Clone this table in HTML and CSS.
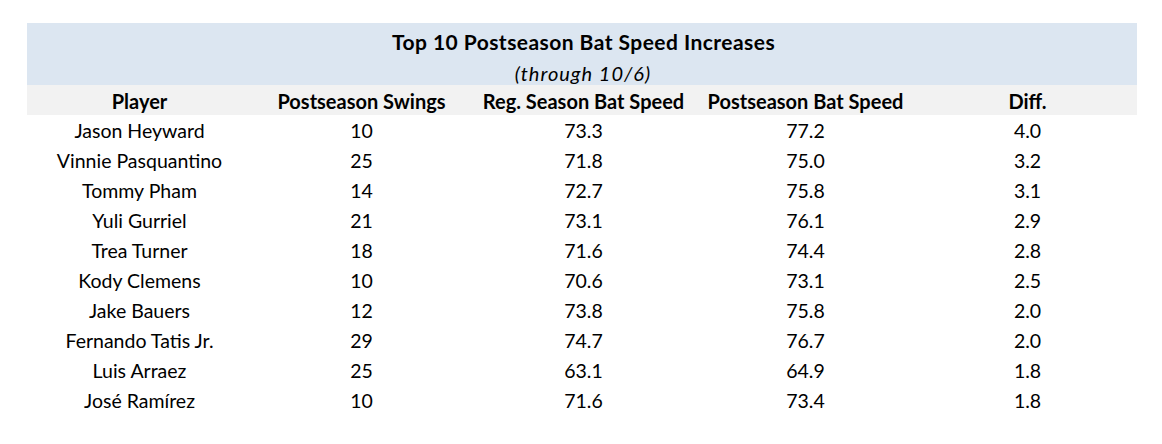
FILE: index.html
```html
<!DOCTYPE html>
<html>
<head>
<meta charset="utf-8">
<link rel="stylesheet" href="styles.css">
</head>
<body>
<div class="sheet">
  <div class="band">
    <div class="title">Top 10 Postseason Bat Speed Increases</div>
    <div class="subtitle">(through 10/6)</div>
  </div>
  <div class="grid head">
    <div>Player</div><div>Postseason Swings</div><div>Reg. Season Bat Speed</div><div>Postseason Bat Speed</div><div>Diff.</div>
  </div>
  <div class="grid row"><div>Jason Heyward</div><div>10</div><div>73.3</div><div>77.2</div><div>4.0</div></div>
  <div class="grid row"><div>Vinnie Pasquantino</div><div>25</div><div>71.8</div><div>75.0</div><div>3.2</div></div>
  <div class="grid row"><div>Tommy Pham</div><div>14</div><div>72.7</div><div>75.8</div><div>3.1</div></div>
  <div class="grid row"><div>Yuli Gurriel</div><div>21</div><div>73.1</div><div>76.1</div><div>2.9</div></div>
  <div class="grid row"><div>Trea Turner</div><div>18</div><div>71.6</div><div>74.4</div><div>2.8</div></div>
  <div class="grid row"><div>Kody Clemens</div><div>10</div><div>70.6</div><div>73.1</div><div>2.5</div></div>
  <div class="grid row"><div>Jake Bauers</div><div>12</div><div>73.8</div><div>75.8</div><div>2.0</div></div>
  <div class="grid row"><div>Fernando Tatis Jr.</div><div>29</div><div>74.7</div><div>76.7</div><div>2.0</div></div>
  <div class="grid row"><div>Luis Arraez</div><div>25</div><div>63.1</div><div>64.9</div><div>1.8</div></div>
  <div class="grid row"><div>José Ramírez</div><div>10</div><div>71.6</div><div>73.4</div><div>1.8</div></div>
</div>
</body>
</html>
```
FILE: styles.css
```css
html, body {
  margin: 0;
  padding: 0;
  background: #ffffff;
}
body {
  font-family: "Lato", "Liberation Sans", sans-serif;
  color: #000000;
}
.sheet {
  width: 1110px;
  margin: 23px 0 0 27px;
}
.band {
  height: 62px;
  background: #dce6f1;
  text-align: center;
}
.title {
  padding-top: 6px;
  padding-left: 3px;
  font-size: 21px;
  font-weight: 700;
  line-height: 26px;
  letter-spacing: 0.45px;
}
.subtitle {
  margin-top: 6px;
  padding-left: 2px;
  font-size: 20px;
  font-style: italic;
  line-height: 24px;
  letter-spacing: 1px;
}
.grid {
  display: grid;
  grid-template-columns: repeat(5, 222px);
  height: 30px;
  box-sizing: border-box;
  padding-top: 2px;
  line-height: 28px;
  font-size: 19.5px;
  text-align: center;
}
.grid > div {
  padding-left: 3px;
}
.head {
  background: #f2f2f2;
  font-weight: 700;
  font-size: 20px;
}
```
